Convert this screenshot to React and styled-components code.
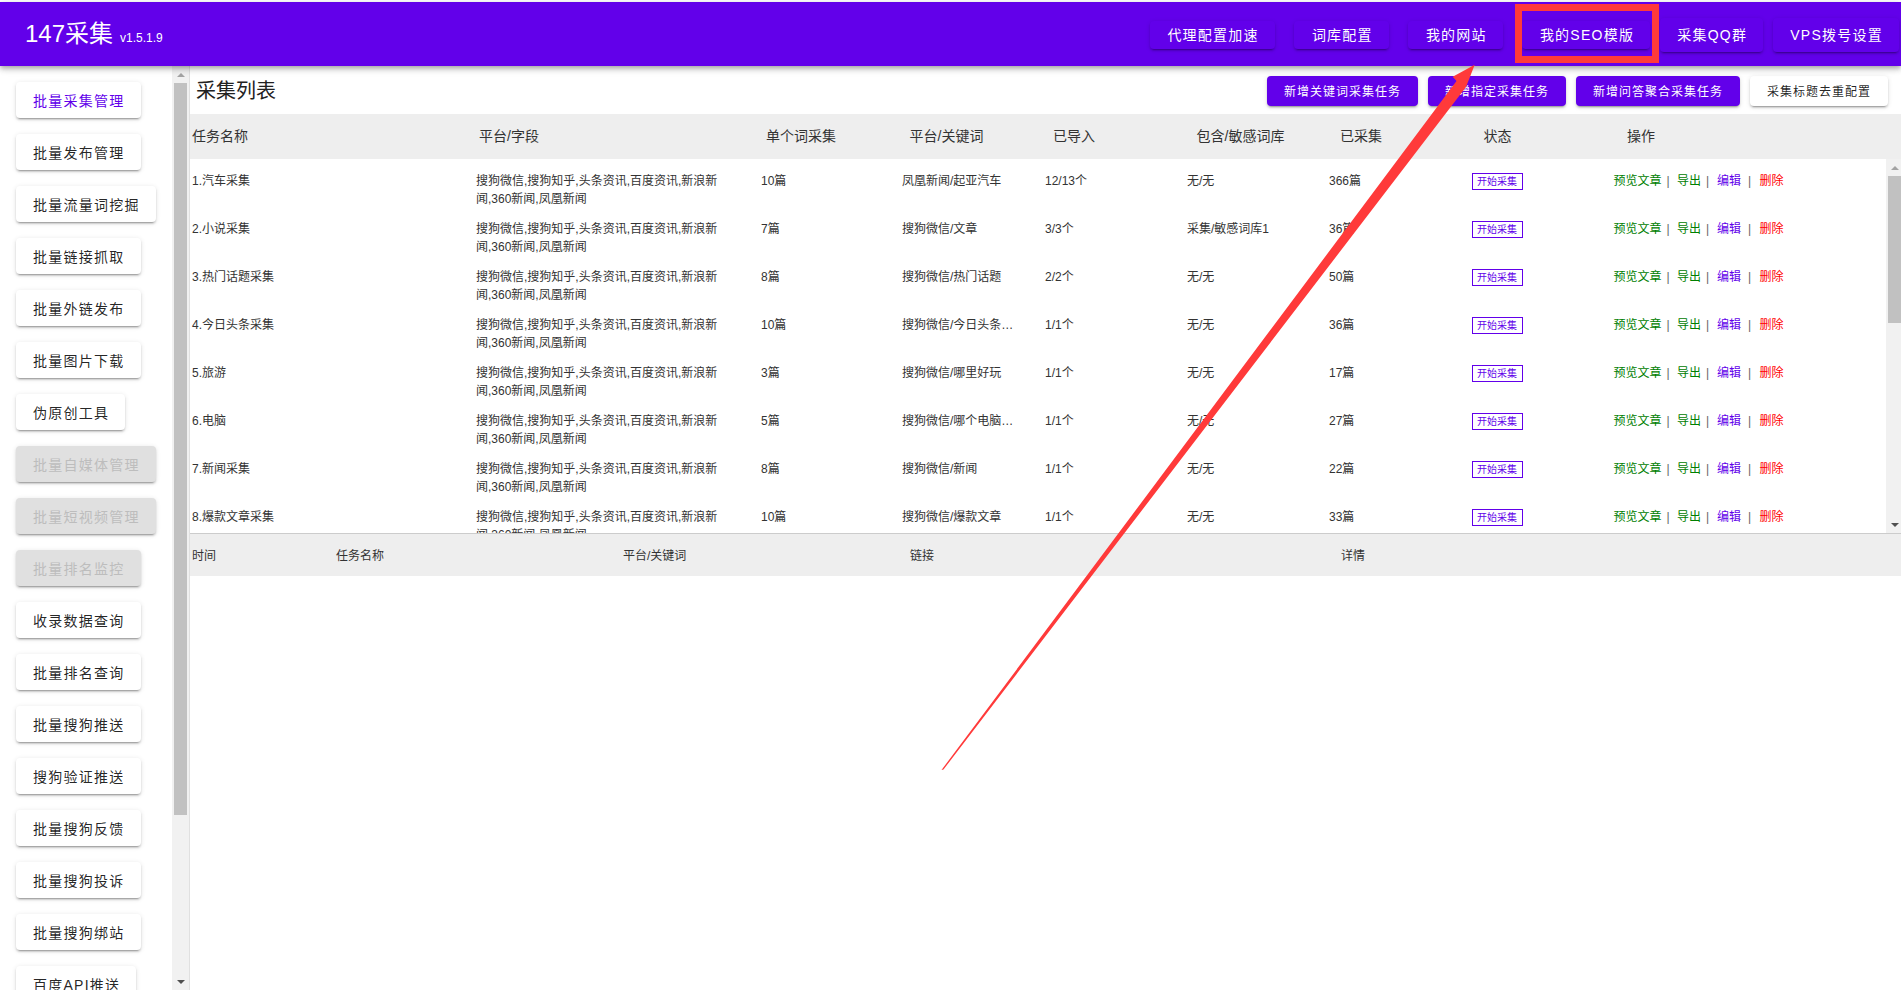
import React from 'react'
import styled, { createGlobalStyle } from 'styled-components'

const purple = '#6200ea'
const fontStack = '"Liberation Sans", "Noto Sans CJK SC", sans-serif'

const GlobalStyle = createGlobalStyle`
    html, body {
        margin: 0;
        padding: 0;
        background: #fff;
        font-family: ${fontStack};
        color: rgba(0, 0, 0, 0.87);
    }

    * {
        box-sizing: border-box;
    }
`

const Page = styled.div`
    position: relative;
    width: 1901px;
    height: 990px;
    padding-top: 2px;
    overflow: hidden;
    display: flex;
    flex-direction: column;
`

const TopBar = styled.header`
    position: relative;
    z-index: 5;
    flex: none;
    height: 64px;
    padding: 0 2px 0 25px;
    display: flex;
    align-items: center;
    justify-content: space-between;
    background: ${purple};
    color: #fff;
    box-shadow: 0 2px 4px -1px rgba(0, 0, 0, 0.2), 0 4px 5px 0 rgba(0, 0, 0, 0.14), 0 1px 10px 0 rgba(0, 0, 0, 0.12);
`

const Brand = styled.div`
    display: flex;
    align-items: baseline;
    gap: 7px;
    padding-top: 4px;
    font-size: 24px;
    line-height: 32px;
`

const Version = styled.span`
    font-size: 12px;
`

const Nav = styled.nav`
    display: flex;
    align-items: center;
    gap: 9.5px;
    padding-top: 2px;
`

const NavGroup = styled.div`
    display: flex;
    align-items: center;
    gap: ${props => props.$gap}px;
`

const materialShadow = '0 3px 1px -2px rgba(0, 0, 0, 0.2), 0 2px 2px 0 rgba(0, 0, 0, 0.14), 0 1px 5px 0 rgba(0, 0, 0, 0.12)'

const NavButton = styled.button`
    height: ${props => (props.$tall ? 34 : 28)}px;
    padding: 0 16px 2px 17.5px;
    border: 0;
    border-radius: 4px;
    background: ${purple};
    color: #fff;
    font-family: ${fontStack};
    font-size: 14px;
    letter-spacing: 1.25px;
    white-space: nowrap;
    box-shadow: ${materialShadow};
`

const Body = styled.div`
    flex: 1;
    min-height: 0;
    display: flex;
`

const Sidebar = styled.aside`
    flex: none;
    width: 190px;
    display: flex;
    border-right: 1px solid #e0e0e0;
`

const SideList = styled.div`
    flex: none;
    width: 172px;
    height: 100%;
    padding: 16px 0 0 16px;
    display: flex;
    flex-direction: column;
    align-items: flex-start;
    gap: 16px;
    overflow: hidden;
`

const SideButton = styled.button`
    flex: none;
    height: 36px;
    padding: 0 16px 0 17px;
    border: 0;
    border-radius: 4px;
    background: ${props => (props.disabled ? '#e0e0e0' : '#fff')};
    color: ${props => (props.disabled ? '#bdbdbd' : props.$active ? purple : 'rgba(0, 0, 0, 0.87)')};
    font-family: ${fontStack};
    font-size: 14px;
    letter-spacing: 1.25px;
    white-space: nowrap;
    box-shadow: ${materialShadow};
`

const ScrollTrack = styled.div`
    flex: none;
    width: ${props => props.$width}px;
    height: 100%;
    display: flex;
    flex-direction: column;
    align-items: flex-end;
    background: #f1f1f1;
    padding-right: ${props => props.$inset}px;
`

const ScrollArrow = styled.div`
    flex: none;
    width: 13px;
    height: 17px;
    display: flex;
    align-items: center;
    justify-content: center;

    &::before {
        content: '';
        width: 0;
        height: 0;
        border-left: 4px solid transparent;
        border-right: 4px solid transparent;
        ${props => (props.$down
            ? 'border-top: 4px solid #505050;'
            : 'border-bottom: 4px solid #a3a3a3;')}
    }
`

const ScrollThumb = styled.div`
    flex: none;
    width: 13px;
    height: ${props => props.$height}px;
    background: #c1c1c1;
`

const ScrollSpace = styled.div`
    flex: 1;
`

const Main = styled.main`
    flex: 1;
    min-width: 0;
    display: flex;
    flex-direction: column;
`

const TitleBar = styled.div`
    flex: none;
    height: 48px;
    padding: 0 13px 0 6px;
    display: flex;
    align-items: center;
    justify-content: space-between;
`

const Title = styled.h1`
    margin: 0 0 2px;
    font-size: 20px;
    font-weight: 400;
    color: #212121;
`

const Actions = styled.div`
    display: flex;
    gap: 10px;
    margin-top: 2px;
`

const ActionButton = styled.button`
    height: 30px;
    padding: 0 17px 1px;
    border: 0;
    border-radius: 4px;
    background: ${props => (props.$plain ? '#fff' : purple)};
    color: ${props => (props.$plain ? 'rgba(0, 0, 0, 0.87)' : '#fff')};
    font-family: ${fontStack};
    font-size: 12px;
    letter-spacing: 1px;
    white-space: nowrap;
    box-shadow: ${materialShadow};
`

const TableHead = styled.div`
    flex: none;
    height: 45px;
    padding: 0 0 3px 2px;
    display: grid;
    grid-template-columns: 287px 287px repeat(7, 143.5px) 1fr;
    align-items: center;
    background: #eee;
    font-size: 14px;
    color: #333;
`

const TableBody = styled.div`
    flex: none;
    height: 375px;
    display: flex;
    border-bottom: 1px solid #ccc;
`

const Rows = styled.div`
    flex: 1;
    min-width: 0;
    overflow: hidden;
`

const Row = styled.div`
    height: 48px;
    padding: 12.5px 0 0 2px;
    display: grid;
    grid-template-columns: 284px 285px 141px 143px 142px 142px 142.5px 142px 1fr;
    align-items: start;
    font-size: 12px;
    line-height: 18px;
    color: #333;
`

const Platforms = styled.div`
    width: 245px;
`

const Keyword = styled.div`
    width: 112px;
    white-space: nowrap;
    overflow: hidden;
    text-overflow: ellipsis;
`

const StartButton = styled.button`
    width: 51px;
    height: 17px;
    padding: 0;
    border: 1px solid ${purple};
    background: #fff;
    color: ${purple};
    font-family: ${fontStack};
    font-size: 10px;
    line-height: 14px;
`

const Ops = styled.div`
    display: flex;
    white-space: nowrap;
`

const OpLink = styled.a`
    color: ${props => props.$color};
`

const OpSep = styled.span`
    width: ${props => props.$width}px;
    padding-left: ${props => props.$pad}px;
    color: #666;
`

const LogHead = styled.div`
    flex: none;
    height: 42px;
    padding: 0 0 2px 2px;
    display: grid;
    grid-template-columns: 144px 287px 287px 431px 1fr;
    align-items: center;
    background: #eee;
    font-size: 12px;
    color: #333;
`

const Highlight = styled.div`
    position: absolute;
    left: 1515px;
    top: 4px;
    z-index: 10;
    width: 144px;
    height: 59px;
    border: 7px solid #ff3a3a;
    pointer-events: none;
`

const ArrowLayer = styled.svg`
    position: absolute;
    left: 0;
    top: 0;
    z-index: 10;
    pointer-events: none;
`

const sideItems = [
    { label: '批量采集管理', active: true },
    { label: '批量发布管理' },
    { label: '批量流量词挖掘' },
    { label: '批量链接抓取' },
    { label: '批量外链发布' },
    { label: '批量图片下载' },
    { label: '伪原创工具' },
    { label: '批量自媒体管理', disabled: true },
    { label: '批量短视频管理', disabled: true },
    { label: '批量排名监控', disabled: true },
    { label: '收录数据查询' },
    { label: '批量排名查询' },
    { label: '批量搜狗推送' },
    { label: '搜狗验证推送' },
    { label: '批量搜狗反馈' },
    { label: '批量搜狗投诉' },
    { label: '批量搜狗绑站' },
    { label: '百度API推送' }
]

const heads = ['任务名称', '平台/字段', '单个词采集', '平台/关键词', '已导入', '包含/敏感词库', '已采集', '状态', '操作']

const platforms = '搜狗微信,搜狗知乎,头条资讯,百度资讯,新浪新闻,360新闻,凤凰新闻'

const tasks = [
    ['1.汽车采集', '10篇', '凤凰新闻/起亚汽车', '12/13个', '无/无', '366篇'],
    ['2.小说采集', '7篇', '搜狗微信/文章', '3/3个', '采集/敏感词库1', '36篇'],
    ['3.热门话题采集', '8篇', '搜狗微信/热门话题', '2/2个', '无/无', '50篇'],
    ['4.今日头条采集', '10篇', '搜狗微信/今日头条采集', '1/1个', '无/无', '36篇'],
    ['5.旅游', '3篇', '搜狗微信/哪里好玩', '1/1个', '无/无', '17篇'],
    ['6.电脑', '5篇', '搜狗微信/哪个电脑好用', '1/1个', '无/无', '27篇'],
    ['7.新闻采集', '8篇', '搜狗微信/新闻', '1/1个', '无/无', '22篇'],
    ['8.爆款文章采集', '10篇', '搜狗微信/爆款文章', '1/1个', '无/无', '33篇']
]

const App = () => {
    return (
        <Page>
            <GlobalStyle />
            <TopBar>
                <Brand>147采集<Version>v1.5.1.9</Version></Brand>
                <Nav>
                    <NavGroup $gap={19.5}>
                        <NavButton>代理配置加速</NavButton>
                        <NavButton>词库配置</NavButton>
                        <NavButton>我的网站</NavButton>
                        <NavButton>我的SEO模版</NavButton>
                    </NavGroup>
                    <NavGroup $gap={9.5}>
                        <NavButton $tall>采集QQ群</NavButton>
                        <NavButton $tall>VPS拨号设置</NavButton>
                    </NavGroup>
                </Nav>
            </TopBar>
            <Body>
                <Sidebar>
                    <SideList>
                        {sideItems.map(item => (
                            <SideButton key={item.label} $active={item.active} disabled={item.disabled}>{item.label}</SideButton>
                        ))}
                    </SideList>
                    <ScrollTrack $width={17} $inset={2}>
                        <ScrollArrow />
                        <ScrollThumb $height={732} />
                        <ScrollSpace />
                        <ScrollArrow $down />
                    </ScrollTrack>
                </Sidebar>
                <Main>
                    <TitleBar>
                        <Title>采集列表</Title>
                        <Actions>
                            <ActionButton>新增关键词采集任务</ActionButton>
                            <ActionButton>新增指定采集任务</ActionButton>
                            <ActionButton>新增问答聚合采集任务</ActionButton>
                            <ActionButton $plain>采集标题去重配置</ActionButton>
                        </Actions>
                    </TitleBar>
                    <TableHead>
                        {heads.map(head => <div key={head}>{head}</div>)}
                    </TableHead>
                    <TableBody>
                        <Rows>
                            {tasks.map(task => (
                                <Row key={task[0]}>
                                    <div>{task[0]}</div>
                                    <Platforms>{platforms}</Platforms>
                                    <div>{task[1]}</div>
                                    <Keyword>{task[2]}</Keyword>
                                    <div>{task[3]}</div>
                                    <div>{task[4]}</div>
                                    <div>{task[5]}</div>
                                    <div><StartButton>开始采集</StartButton></div>
                                    <Ops>
                                        <OpLink $color="#008000">预览文章</OpLink>
                                        <OpSep $width={15.5} $pad={5}>|</OpSep>
                                        <OpLink $color="#008000">导出</OpLink>
                                        <OpSep $width={16} $pad={5}>|</OpSep>
                                        <OpLink $color={purple}>编辑</OpLink>
                                        <OpSep $width={18.5} $pad={7}>|</OpSep>
                                        <OpLink $color="#ff0000">删除</OpLink>
                                    </Ops>
                                </Row>
                            ))}
                        </Rows>
                        <ScrollTrack $width={15} $inset={0}>
                            <ScrollArrow />
                            <ScrollThumb $height={147} />
                            <ScrollSpace />
                            <ScrollArrow $down />
                        </ScrollTrack>
                    </TableBody>
                    <LogHead>
                        <div>时间</div>
                        <div>任务名称</div>
                        <div>平台/关键词</div>
                        <div>链接</div>
                        <div>详情</div>
                    </LogHead>
                </Main>
            </Body>
            <Highlight />
            <ArrowLayer width="1901" height="990" viewBox="0 0 1901 990">
                <polygon points="941.5,770 1456.5,81 1452.7,76.7 1474.7,64.7 1466,87 943.5,769.5" fill="#ff3a3a" />
            </ArrowLayer>
        </Page>
    )
}

export default App
